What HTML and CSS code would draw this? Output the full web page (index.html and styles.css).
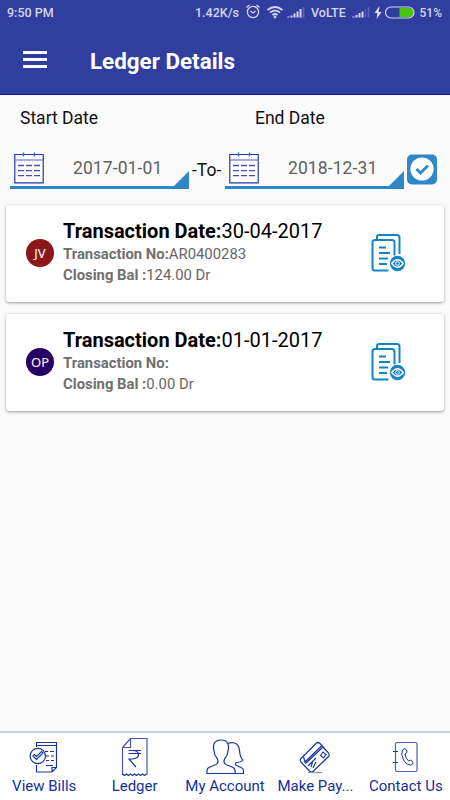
FILE: index.html
```html
<!DOCTYPE html>
<html lang="en">
<head>
  <meta charset="UTF-8">
  <meta name="viewport" content="width=device-width, initial-scale=1.0">
  <title>Ledger Details</title>
  <link rel="stylesheet" href="styles.css">
</head>
<body>
  <svg class="defs" width="0" height="0">
    <symbol id="calendar" viewBox="0 0 30 32">
      <path d="M.8 2.500h28.400v28.300H.8z" fill="#fff" stroke="#2334a8" stroke-width="1.200"/>
      <path d="M1 8h28" stroke="#8088c8" stroke-width="1.400"/>
      <path d="M9.500 .5v4M20.500 .5v4" stroke="#2878b4" stroke-width="1.400"/>
      <path d="M4 13.500h22M4 18.700h22M4 23.700h22" stroke="#4150b2" stroke-width="1.300" stroke-dasharray="6 2"/>
    </symbol>
    <symbol id="document" viewBox="0 0 36 40">
      <g fill="none" stroke="#1583c8" stroke-width="2">
        <path d="M7 6V4q0-2 2-2h18q2.500 0 2.500 2.500V21"/>
        <path d="M18.500 37.500H5q-2.500 0-2.500-2.500V9.500Q2.500 7 5 7h17q2.500 0 2.500 2.500v13"/>
        <path d="M9 14.500h7M9 20h11M9 25.500h9M9 31h8"/>
      </g>
      <circle cx="27.500" cy="30.500" r="7.700" fill="#1583c8"/>
      <path d="M21.700 30.500q5.800-7.500 11.600 0q-5.800 7.500-11.600 0z" fill="none" stroke="#fff" stroke-width="1.300"/>
      <circle cx="27.500" cy="30.500" r="1.900" fill="none" stroke="#fff"/>
    </symbol>
  </svg>

  <header>
    <div class="status">
      <span class="time">9:50 PM</span>
      <span class="speed">1.42K/s</span>
      <svg class="status-icons" width="62" height="18" viewBox="0 0 62 18" fill="none" stroke="#d3d7ee">
        <circle cx="8" cy="10" r="5.600" stroke-width="1.300"/>
        <path d="M5.500 9l2.500 2 2.500-2M1.500 5.500l3-2.500M11.500 3l3 2.500" stroke-width="1.300"/>
        <path d="M22.500 8q7.500-6 15 0M25 10.600q5-4 10 0M27.500 13q2.500-2 5 0" stroke-width="1.700"/>
        <circle cx="30" cy="15" r="1" fill="#d3d7ee"/>
        <path d="M43.500 15.500v-1M46.500 15.500v-2M49.500 15.500v-4M52.500 15.500v-6M55.500 15.500V7" stroke-width="2"/>
        <path d="M58.500 15.500V5" stroke="#5662b3" stroke-width="2"/>
      </svg>
      <span class="volte">VoLTE</span>
      <svg class="battery" width="68" height="18" viewBox="0 0 68 18">
        <path d="M4.500 15.500v-1M7.500 15.500v-2.500M10.500 15.500v-4.500M13.500 15.500V9.500" stroke="#d3d7ee" stroke-width="2"/>
        <path d="M16.500 15.500V7M19.500 15.500V5" stroke="#5662b3" stroke-width="1.500"/>
        <path d="M30.500 4l-5 7h3l-1 6 5-7h-3z" fill="#e4e6f5"/>
        <path d="M50.500 6h9.500a4.500 4.500 0 0 1 0 9h-9.500z" fill="#4bc60a"/>
        <rect x="36.500" y="5" width="28.500" height="11" rx="5.500" fill="none" stroke="#d3d7ee" stroke-width="1.200"/>
      </svg>
      <span class="percent">51%</span>
    </div>
    <div class="toolbar">
      <div class="menu"><i></i><i></i><i></i></div>
      <h1>Ledger Details</h1>
    </div>
  </header>

  <main>
    <div class="labels">
      <span>Start Date</span>
      <span>End Date</span>
    </div>
    <div class="dates">
      <div class="date-field">
        <svg width="30" height="32"><use href="#calendar"/></svg>
        <span>2017-01-01</span>
        <i class="corner"></i>
      </div>
      <span class="to">-To-</span>
      <div class="date-field">
        <svg width="30" height="32"><use href="#calendar"/></svg>
        <span>2018-12-31</span>
        <i class="corner"></i>
      </div>
      <svg class="submit" width="30" height="31" viewBox="0 0 30 31">
        <rect y=".5" width="30" height="30" rx="5" fill="#2e87c8"/>
        <circle cx="15" cy="15" r="11.600" fill="#fff"/>
        <path d="M9.500 15l4 4 7.500-7.500" fill="none" stroke="#2e87c8" stroke-width="2.800"/>
      </svg>
    </div>

    <div class="card">
      <div class="badge red">JV</div>
      <div class="details">
        <h2><b>Transaction Date:</b><span>30-04-2017</span></h2>
        <p><b>Transaction No:</b><span>AR0400283</span></p>
        <p><b>Closing Bal :</b><span>124.00 Dr</span></p>
      </div>
      <svg class="view" width="36" height="40"><use href="#document"/></svg>
    </div>
    <div class="card">
      <div class="badge purple">OP</div>
      <div class="details">
        <h2><b>Transaction Date:</b><span>01-01-2017</span></h2>
        <p><b>Transaction No:</b></p>
        <p><b>Closing Bal :</b><span>0.00 Dr</span></p>
      </div>
      <svg class="view" width="36" height="40"><use href="#document"/></svg>
    </div>
  </main>

  <nav>
    <a class="tab">
      <svg width="30" height="38" viewBox="0 0 30 38">
        <path d="M7.500 9V4.500h20v25l-4.500 4.500H7.500v-7M7.500 7.500h20M23 34v-4.500h4.500" />
        <path d="M16 13.500h3M21 13.500h4M17 18h3M22 18h3M17 22.500h3M22 22.500h3M17 27.500h7"/>
        <circle cx="8.800" cy="18" r="7.700" fill="#fff"/>
        <path d="M4 18l1.500-1.500 2 2 5-5 1.500 1.500-6.500 6.500z"/>
      </svg>
      <span>View Bills</span>
    </a>
    <a class="tab">
      <svg width="28" height="38" viewBox="0 0 28 38">
        <path d="M1.500 9.500l8-9H26V37M1.500 9.500V37M9.500.5v9h-8" stroke="#4354b2"/>
        <path d="M1.500 36l2 1.500 2-1.500 2 1.500 2-1.500 2 1.500 2-1.500 2 1.500 2-1.500 2 1.500 2-1.500 2 1.500 2-1.500"/>
        <path d="M7.500 12.500h12.500M7.500 15.500h12.500M7.500 12.500h4q6 0 6 4t-6 4.500H8l7 8"/>
      </svg>
      <span>Ledger</span>
    </a>
    <a class="tab">
      <svg width="38" height="38" viewBox="0 0 38 38">
        <path d="M1 35.500v-3q0-2.500 3-3.500l6-2.500q3-1.500 1.500-5.500Q8 17 8 13q-1-3 0-7 1.500-4 7-4t7 4q1 4 0 7 0 4-3.500 8-1.500 4 1.500 5.500l6 2.500q3 1 3 3.500v3z"/>
        <path d="M22 5.500q3-1.500 6.500-.5 4.500 1.500 5 7.500.5 7 3.500 9.500-2 2.500-7 2.500-1.500 2 .5 3l4.500 2q2.500 1 2.500 3v3h-9"/>
      </svg>
      <span>My Account</span>
    </a>
    <a class="tab">
      <svg width="34" height="38" viewBox="0 0 34 38">
        <path d="M3 20.500L18 5.500q2-2 4 0l8.500 9.500q1.500 2 0 3.500L15.500 33q-2 2-4 0L3 24q-1.500-2 0-3.500z"/>
        <path d="M5.500 18.500L7 24 24 7.500M7.500 25.500L25 9M10 28L18 20M13 29l1.500-4.500M15 30l3-6"/>
        <path d="M22.500 17.500l2.500-3.500 3 2.500-2.500 3.500z"/>
        <path d="M10 34.500h14" stroke="#8994cd"/>
      </svg>
      <span>Make Pay...</span>
    </a>
    <a class="tab">
      <svg width="26" height="38" viewBox="0 0 26 38">
        <rect x="2.500" y="4.500" width="21.500" height="29" rx="1.500" stroke="#5060b8"/>
        <path d="M0 13.500h5M0 24.500h5"/>
        <path d="M9.500 12q3-3 4.500 1 .5 2-2 3 .5 4 3.500 7 2-2 4 .5 1.500 3-2 3.500-4 .5-7-5-3-6-1-10z" stroke-width="1"/>
      </svg>
      <span>Contact Us</span>
    </a>
  </nav>
</body>
</html>
```
FILE: styles.css
```css
* {
  box-sizing: border-box;
}
body {
  font-family: Roboto, sans-serif;
  margin: 0;
  height: 800px;
  display: flex;
  flex-direction: column;
  background-color: #fafafa;
  color: #111;
}
svg {
  display: block;
  flex-shrink: 0;
}
.defs {
  position: absolute;
}
header {
  height: 95px;
  background-color: #303e9f;
  border-bottom: 1px solid #101888;
  color: #fff;
}
.status {
  height: 25px;
  display: flex;
  align-items: center;
  padding: 0 8px 0 7px;
  font-size: 12.5px;
  font-weight: 500;
  color: #d3d7ee;
  white-space: nowrap;
}
.time {
  width: 188px;
}
.speed {
  width: 50px;
}
.volte {
  width: 36px;
  margin-left: 4px;
}
.battery {
  margin-left: 2px;
}
.percent {
  margin-left: auto;
  font-size: 12px;
}
.status-icons,
.battery {
  margin-top: -3px;
}
.toolbar {
  display: flex;
  align-items: center;
  height: 69px;
  padding: 3px 0 0 23px;
}
.menu {
  display: flex;
  flex-direction: column;
  gap: 4px;
  width: 24px;
  margin-top: -3px;
}
.menu i {
  height: 3px;
  background-color: #fff;
}
h1 {
  margin: 0 0 0 43px;
  font-size: 22.4px;
  font-weight: 700;
}
main {
  flex: 1;
}
.labels {
  display: flex;
  padding: 12px 20px 0;
  font-size: 17.5px;
  line-height: 22px;
}
.labels span {
  width: 235px;
}
.labels span + span {
  width: auto;
}
.dates {
  display: flex;
  height: 60px;
  align-items: flex-end;
  padding-left: 10px;
}
.date-field {
  position: relative;
  display: flex;
  width: 179px;
  height: 37px;
  padding-left: 4px;
  border-bottom: 3px solid #2e87c8;
  font-size: 17.5px;
  line-height: 32px;
  color: #606060;
}
.date-field span {
  margin-left: 29px;
  letter-spacing: .1px;
}
.corner {
  position: absolute;
  right: 0;
  bottom: 0;
  width: 15px;
  height: 15px;
  background-color: #2e87c8;
  clip-path: polygon(100% 0, 100% 100%, 0 100%);
}
.to {
  width: 36px;
  padding-left: 3px;
  font-size: 17.5px;
  line-height: 37px;
}
.submit {
  margin: 0 0 4px 3px;
}
.card {
  display: flex;
  height: 97px;
  margin: 16px 6px 12px;
  padding: 14px 0 0 20px;
  background-color: #fff;
  border-radius: 3px;
  box-shadow: 0 1px 3px rgba(0, 0, 0, .38);
}
.card + .card {
  margin-top: 0;
}
.badge {
  width: 28px;
  height: 28px;
  margin-top: 20px;
  border-radius: 50%;
  font-family: "Noto Sans", sans-serif;
  font-size: 13px;
  line-height: 28px;
  text-align: center;
  color: #fff;
}
.red {
  background-color: #8b171a;
}
.purple {
  background-color: #270066;
}
.details {
  width: 309px;
  margin-left: 9px;
  white-space: nowrap;
}
.details h2 {
  margin: 0;
  font-size: 20px;
  line-height: 25px;
  font-weight: 400;
  color: #000;
}
.details p {
  margin: 0;
  font-size: 14.85px;
  line-height: 20.5px;
  color: #666;
}
.details p b {
  color: #707070;
}
.view {
  margin: 14px 0 0 -2px;
}
nav {
  display: flex;
  height: 69px;
  border-top: 2px solid #c8cfea;
  background-color: #fff;
  color: #14309a;
}
.tab {
  flex: 1;
  display: flex;
  flex-direction: column;
  align-items: center;
  padding-top: 5px;
  font-size: 15px;
  white-space: nowrap;
}
.tab:nth-child(-n+2) {
  padding-right: 2px;
}
.tab:nth-child(n+4) {
  padding-left: 2px;
}
.tab svg {
  fill: none;
  stroke: #1b35a0;
  stroke-width: 1.2;
}
.tab span {
  margin-top: 1px;
}
```
